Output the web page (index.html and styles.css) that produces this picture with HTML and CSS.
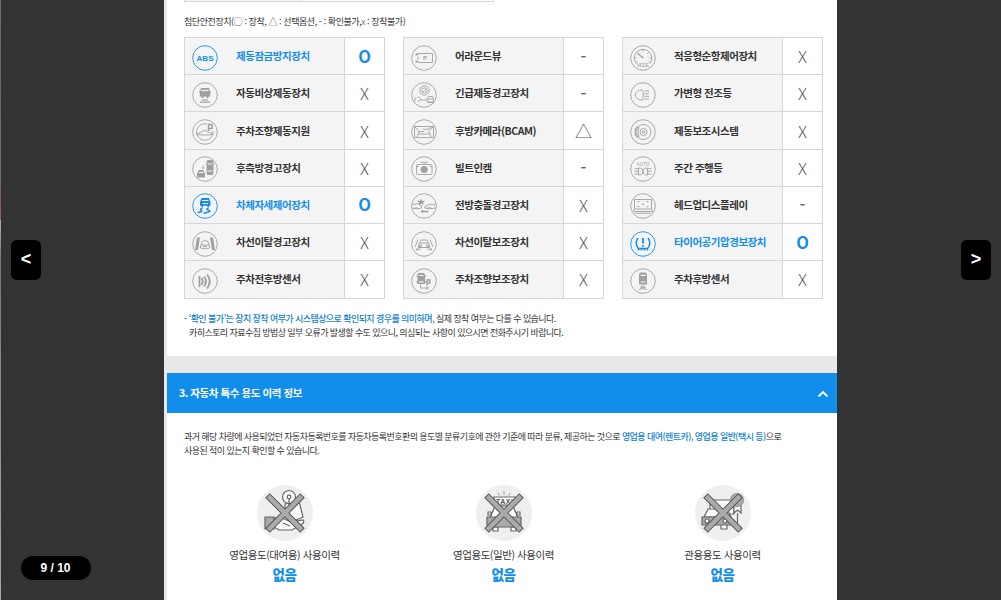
FILE: index.html
```
<!DOCTYPE html>
<html lang="ko">
<head>
    <meta charset="UTF-8">
    <meta name="viewport" content="width=device-width, initial-scale=1.0">
    <title>자동차 이력 정보</title>
    <link rel="stylesheet" href="styles.css">
</head>
<body>
    <div class="viewer">
        <div class="page">
            <section class="card safety">
                <div class="prev-table"><div class="prev-label"></div><div class="prev-value"></div></div>
                <p class="legend">첨단안전장치(<span class="sym">○</span> : 장착, <span class="sym">△</span> : 선택옵션, - : 확인불가,<span class="sym">x</span> : 장착불가)</p>
                <div class="tables">
                    <ul class="options">
                        <li class="on">
                            <svg class="icon" viewBox="0 0 26 26"><circle cx="13" cy="13" r="12.3"/><text x="13" y="16" textLength="17">ABS</text></svg>
                            <span class="name">제동잠금방지장치</span><span class="mark">O</span>
                        </li>
                        <li>
                            <svg class="icon" viewBox="0 0 26 26"><circle cx="13" cy="13" r="12.3"/><path class="fill" d="M9 6h8l.800 3H19v1.500h-.800v4h-1.700V16h-2v-1.500h-3V16h-2v-1.500H7.800v-4H7V9h1.200zM10.500 17.300h5l1 1.200h-7zM8 19.500h10v1.300H8z"/><path class="cut" d="M9.500 8.500h7"/></svg>
                            <span class="name">자동비상제동장치</span><span class="mark">X</span>
                        </li>
                        <li>
                            <svg class="icon" viewBox="0 0 26 26"><circle cx="13" cy="13" r="12.3"/><path d="M15 5A8.300 8.300 0 1 0 21 12M5 14.500q4-.500 7.500-3.500 4 3 8.500 3.500M5 15.500q4 .500 8 .500t8-.500"/><path class="thick" d="M16.500 12V5.500h3.500v4h-3.500"/></svg>
                            <span class="name">주차조향제동지원</span><span class="mark">X</span>
                        </li>
                        <li>
                            <svg class="icon" viewBox="0 0 26 26"><circle cx="13" cy="13" r="12.3"/><path class="fill" d="M15.500 4h5l1 2v11l-1 2h-5l-1-2V6zM6.500 14h5l.800 2.500.700.500v4.500H5V17l.700-.500zM13.500 8h9v1h-9z"/><path class="cut" d="M15.500 8h5M15.500 15h5M6.500 16.500h5"/><path d="M11 9.500l1 3M9.500 11l1.500 2"/></svg>
                            <span class="name">후측방경고장치</span><span class="mark">X</span>
                        </li>
                        <li class="on">
                            <svg class="icon" viewBox="0 0 26 26"><circle cx="13" cy="13" r="12.3"/><path class="fill" d="M9.500 5h7.500l1 3 .500.800v4h-1.500v1.500h-1.500v-1.500h-4.500v1.500H9.500v-1.500H8V8.800L8.500 8z"/><path class="cut" d="M10 7.500h6.500M10.500 10.500h5.500"/><path class="thick" d="M10.500 15c-5 2 1 2.500-1 3.500s-2.500 1-4 1M16.500 15c-5 2 3.500 2.500 1 3.500s-4.500 1-6 2"/></svg>
                            <span class="name">차체자세제어장치</span><span class="mark">O</span>
                        </li>
                        <li>
                            <svg class="icon" viewBox="0 0 26 26"><circle cx="13" cy="13" r="12.3"/><path class="fill" d="M5 6.500h3L6 19H3zM18 6.500h3L23 19h-3z"/><path d="M9 14l1.200-3.500q3-2 5.600 0L17 14l.500 1v2q-4.500 2-9 0v-2zM9 14h8M11.500 16.500V15.500h3v1"/></svg>
                            <span class="name">차선이탈경고장치</span><span class="mark">X</span>
                        </li>
                        <li>
                            <svg class="icon" viewBox="0 0 26 26"><circle cx="13" cy="13" r="12.3"/><path class="wave" d="M7.500 8v11M9.500 10q2.500 3.500 0 7M12 8.500q4 5 0 10M15 6.500q5.500 7 0 14"/></svg>
                            <span class="name">주차전후방센서</span><span class="mark">X</span>
                        </li>
                    </ul>
                    <ul class="options">
                        <li>
                            <svg class="icon" viewBox="0 0 26 26"><circle cx="13" cy="13" r="12.3"/><path d="M7 8.500h14.500v9H7M7 8.500v1M7 11.500v3M7 9.500H4.500M7 16.500H4.500"/><path class="fill" d="M4 9.500L6.500 8v3zM4 16.500L6.500 15v3z"/><text class="tiny p" x="14" y="15.200">P</text></svg>
                            <span class="name">어라운드뷰</span><span class="mark dash">-</span>
                        </li>
                        <li>
                            <svg class="icon" viewBox="0 0 26 26"><circle cx="13" cy="13" r="12.3"/><circle cx="13.500" cy="8.500" r="4.700"/><circle cx="13.500" cy="8.500" r="2.700"/><path d="M12 10l3-3M4 15.500v4M6 15q4 0 3.500 2.500t-3 1.500M10 18h5M16 17l1.500-2.500h4l1 2.500v3H16zM17 20.500h5M16 17h6"/></svg>
                            <span class="name">긴급제동경고장치</span><span class="mark dash">-</span>
                        </li>
                        <li>
                            <svg class="icon" viewBox="0 0 26 26"><circle cx="13" cy="13" r="12.3"/><path d="M3.500 7.500h19v11h-19zM4 8l4 4.500h5M22 8l-4.500 4M8 12.500L6 18.500M18 12.500l2 6M7.500 15h11M12 10l4 .500L20.500 8"/></svg>
                            <span class="name">후방카메라(BCAM)</span><span class="mark tri">△</span>
                        </li>
                        <li>
                            <svg class="icon" viewBox="0 0 26 26"><circle cx="13" cy="13" r="12.3"/><rect x="5.500" y="8.500" width="15.500" height="10" rx="1"/><circle class="fill" cx="13.200" cy="13.500" r="3.500"/><path d="M13.200 8.500V6M9.500 6.300h7.500M6 10.500h2M18.500 10.500h2"/></svg>
                            <span class="name">빌트인캠</span><span class="mark dash">-</span>
                        </li>
                        <li>
                            <svg class="icon" viewBox="0 0 26 26"><circle cx="13" cy="13" r="12.3"/><path d="M1.500 11.500q5-2 9 1v2.500q-4 1.500-9 0M24.500 12q-6-2-10 1l-1 2q6 1.500 11 0M3 15.500q3-2 5 .500M16 15.500q2-2 5 0"/><path class="fill" d="M6 7.500l3 .500L10 5.500l1 2.500 3-.300-2 2 1 2-3-1-2.500 1 .500-2zM9.500 18.500l2.500-2v1.300h5.500v1.400H12v1.300z"/></svg>
                            <span class="name">전방충돌경고장치</span><span class="mark">X</span>
                        </li>
                        <li>
                            <svg class="icon" viewBox="0 0 26 26"><circle cx="13" cy="13" r="12.3"/><path d="M7 8.500L4 16M19 8.500l3 7.500M8.500 12L10 9h6l1.500 3 .700 1v3.500H7.800V13zM9 12h8M9 14h2M15 14h2"/><path class="fill" d="M7.500 14.500h3v2.200h-3zM15.500 14.500h3v2.200h-3zM4.500 18.300l2-1.500v1h3v1h-3v1zM21.500 18.300l-2-1.500v1h-3v1h3v1z"/></svg>
                            <span class="name">차선이탈보조장치</span><span class="mark">X</span>
                        </li>
                        <li>
                            <svg class="icon" viewBox="0 0 26 26"><circle cx="13" cy="13" r="12.3"/><path class="fill" d="M7.500 5h5.500l1 2v9H6.500V7zM5.500 7.500H15v1.300H5.500zM5.500 13H15v1.500H5.500z"/><path class="cut" d="M8 7.500h4.500M8 13.800h4.500"/><path class="thick" d="M16 17.500V12h2.800v3H16"/><path d="M9.500 16.500v3.500h8M15.500 18.500l2 1.500-2 1.500"/></svg>
                            <span class="name">주차조향보조장치</span><span class="mark">X</span>
                        </li>
                    </ul>
                    <ul class="options">
                        <li>
                            <svg class="icon" viewBox="0 0 26 26"><circle cx="13" cy="13" r="12.3"/><path d="M6 18.500A8.800 8.800 0 1 1 20 18.500M13 4.500v2M4.500 13h2M19.500 13h2M7.300 7.300l1.400 1.400M18.700 7.300l-1.400 1.400M5.800 17l1.500-1M20.200 17l-1.500-1"/><path class="thick" d="M7.500 8.500l6 4.500"/><text class="tiny" x="13" y="21.500" textLength="12">MODE</text></svg>
                            <span class="name">적응형순항제어장치</span><span class="mark">X</span>
                        </li>
                        <li>
                            <svg class="icon" viewBox="0 0 26 26"><circle cx="13" cy="13" r="12.3"/><path d="M12.500 8C7.500 8 5.500 10.500 5.500 13s2 5 7 5c1-3 1-7 0-10zM14.500 9H19M14.500 11.700H19M14.500 14.300H19M14.500 17H19"/></svg>
                            <span class="name">가변형 전조등</span><span class="mark">X</span>
                        </li>
                        <li>
                            <svg class="icon" viewBox="0 0 26 26"><circle cx="13" cy="13" r="12.3"/><circle cx="13.500" cy="13" r="7.500"/><circle cx="13.500" cy="13" r="3.500"/><circle cx="13.500" cy="13" r="1.200"/><path d="M7 7.500q-4 5.500 0 11l2-1q-2.500-4.500 0-9zM4.500 10l3 .500M4.500 16l3-.500"/></svg>
                            <span class="name">제동보조시스템</span><span class="mark">X</span>
                        </li>
                        <li>
                            <svg class="icon" viewBox="0 0 26 26"><circle cx="13" cy="13" r="12.3"/><text class="tiny" x="13" y="9.500" textLength="13">AUTO</text><path d="M4.500 12.700H8M4.500 15.300H8M4.500 18H8M8.500 12q4.500 0 4.500 3.500T8.500 19zM21.500 12.700H18M21.500 15.300H18M21.500 18H18M17.500 12Q13 12 13 15.500t4.500 3.500z"/></svg>
                            <span class="name">주간 주행등</span><span class="mark">X</span>
                        </li>
                        <li>
                            <svg class="icon" viewBox="0 0 26 26"><circle cx="13" cy="13" r="12.3"/><path d="M4.500 6.500h17v9.500h-17zM4 16l-.500 2.500h19L22 16M5 20.200h16M8 9.500V8.500h1.500M18 9.500V8.500h-1.500M8 12.800v1h1.500M18 12.800v1h-1.500M12 11.200h2M13 10.200v2"/></svg>
                            <span class="name">헤드업디스플레이</span><span class="mark dash">-</span>
                        </li>
                        <li class="on">
                            <svg class="icon" viewBox="0 0 26 26"><circle cx="13" cy="13" r="12.3"/><path class="thick" d="M8 7Q4 12.500 8.500 17.500h9Q22 12.500 18 7M8.500 17.500v2M11.500 17.500v2M14.500 17.500v2M17.500 17.500v2"/><path class="wave" d="M13 7v5.500M13 14v1.800"/></svg>
                            <span class="name">타이어공기압경보장치</span><span class="mark">O</span>
                        </li>
                        <li>
                            <svg class="icon" viewBox="0 0 26 26"><circle cx="13" cy="13" r="12.3"/><path class="fill" d="M10 4.500h6l1 2V16.500H9V6.500z"/><path class="cut" d="M10.500 7.300h5M10.500 14h5"/><path d="M11 18.500q2-1 4 0M10 20q3-1.500 6 0M9 21.500q4-2 8 0"/></svg>
                            <span class="name">주차후방센서</span><span class="mark">X</span>
                        </li>
                    </ul>
                </div>
                <div class="notes">
                    <p class="note-first">- <em>‘확인 불가’는 장치 장착 여부가 시스템상으로 확인되지 경우를 의미하며,</em> 실제 장착 여부는 다를 수 있습니다.</p>
                    <p class="note-second">카히스토리 자료수집 방법상 일부 오류가 발생할 수도 있으니, 의심되는 사항이 있으시면 전화주시기 바랍니다.</p>
                </div>
            </section>

            <section class="card usage">
                <header class="section-head">
                    <h2>3. 자동차 특수 용도 이력 정보</h2>
                    <svg class="chevron" viewBox="0 0 12 8"><path d="M1.500 6.500L6 2l4.500 4.500"/></svg>
                </header>
                <p class="desc">과거 해당 차량에 사용되었던 자동차등록번호를 자동차등록번호판의 용도별 분류기호에 관한 기준에 따라 분류, 제공하는 것으로 <em>영업용 대여(렌트카), 영업용 일반(택시 등)</em>으로<br>사용된 적이 있는지 확인할 수 있습니다.</p>
                <div class="history">
                    <div class="item">
                        <svg class="pic" viewBox="0 0 56 56">
                            <circle class="disc" cx="28" cy="28" r="28"/>
                            <path class="paper" d="M28 19l14-3 4 16-9 4-9-4z"/>
                            <circle class="paper" cx="32" cy="12" r="6.500"/>
                            <circle cx="32" cy="12" r="1.800"/>
                            <path d="M32 14v10"/>
                            <path class="paper" d="M17 33h8l9 4 12-2q2 2-1 4l-10 6H22l-5-3zM26 38l7 3"/>
                            <path class="grey" d="M8 32h9v12H8z"/>
                            <path class="cross-edge" d="M10.500 10.500l35 35M45.500 10.500l-35 35"/>
                            <path class="cross" d="M11.200 11.200l33.600 33.600M44.800 11.200L11.200 44.800"/>
                        </svg>
                        <span class="label">영업용도(대여용) 사용이력</span>
                        <strong>없음</strong>
                    </div>
                    <div class="item">
                        <svg class="pic" viewBox="0 0 56 56">
                            <circle class="disc" cx="28" cy="28" r="28"/>
                            <path class="ray" d="M28 6v4M22 8l1.500 2.500M34 8l-1.500 2.500"/>
                            <path class="paper" d="M19 21h18l5 12H14z"/>
                            <path class="paper" d="M18 12h21v8H18z"/>
                            <text class="taxi" x="28.500" y="19" textLength="17">TAXI</text>
                            <path class="paper" d="M17 42h5v4h-5zM35 42h5v4h-5zM12 27h3v3h-3zM41 27h3v3h-3z"/>
                            <path class="grey" d="M11 32h34v10H11z"/>
                            <path class="cross-edge" d="M10.500 10.500l35 35M45.500 10.500l-35 35"/>
                            <path class="cross" d="M11.200 11.200l33.600 33.600M44.800 11.200L11.200 44.800"/>
                        </svg>
                        <span class="label">영업용도(일반) 사용이력</span>
                        <strong>없음</strong>
                    </div>
                    <div class="item">
                        <svg class="pic" viewBox="0 0 56 56">
                            <circle class="disc" cx="28" cy="28" r="28"/>
                            <path class="paper" d="M15 15h24v14H15z"/>
                            <path class="paper" d="M13 24h19l4 8H9zM26 39h6v5h-6zM39 20h7v8l-3.500-3-3.500 3z"/>
                            <path d="M42.500 28v12H36"/>
                            <circle class="medal" cx="42" cy="15" r="6.500"/>
                            <path class="grey" d="M7 32h29v8H7z"/>
                            <circle class="paper" cx="12" cy="36" r="2"/>
                            <circle class="paper" cx="30" cy="36" r="2"/>
                            <path class="cross-edge" d="M10.500 10.500l35 35M45.500 10.500l-35 35"/>
                            <path class="cross" d="M11.200 11.200l33.600 33.600M44.800 11.200L11.200 44.800"/>
                        </svg>
                        <span class="label">관용용도 사용이력</span>
                        <strong>없음</strong>
                    </div>
                </div>
            </section>
        </div>

        <button class="nav prev">&lt;</button>
        <button class="nav next">&gt;</button>
        <div class="counter">9 / 10</div>
    </div>
</body>
</html>
```
FILE: styles.css
```
* {
    box-sizing: border-box;
}

body {
    margin: 0;
    overflow: hidden;
    font-family: "Noto Sans CJK KR", "Noto Sans", sans-serif;
    color: #333;
    background: linear-gradient(#6f6a66 0, #686868 100px, #74706d 170px, #8b5558 200px, #a05a5e 219px, #b0b0b0 221px, #777 260px, #a8a8a8 100%);
}

p, h2, ul {
    margin: 0;
    padding: 0;
}

em {
    font-style: normal;
    font-weight: 500;
    color: #117fce;
}

.viewer {
    position: relative;
    height: 600px;
    margin-left: 1px;
    padding-left: 163px;
    background-color: #333;
    overflow: hidden;
}

.page {
    width: 673px;
    height: 600px;
    padding-left: 3px;
    background-color: #e8e8e8;
}

.card {
    background-color: #fff;
}

.safety {
    height: 356px;
    padding-left: 17px;
}

/* tail of the table above */
.prev-table {
    display: flex;
    width: 310px;
    height: 2px;
    border: 1px solid #d6d6d6;
    border-top: none;
}

.prev-label {
    width: 117px;
    background-color: #f4f4f4;
    border-right: 1px solid #d6d6d6;
}

.legend {
    padding-top: 13px;
    height: 35px;
    font-size: 9px;
    line-height: 14px;
    letter-spacing: -0.43px;
    white-space: nowrap;
}

.sym {
    font-weight: 300;
}

.tables {
    display: flex;
    gap: 18.5px;
}

.options {
    display: grid;
    grid-template-rows: repeat(7, 1fr);
    width: 200.5px;
    height: 261.5px;
    list-style: none;
    border: 1px solid #d6d6d6;
    border-bottom: none;
}

.options li {
    display: flex;
    align-items: center;
    border-bottom: 1px solid #d6d6d6;
    background-color: #f4f4f4;
}

.icon {
    width: 26px;
    height: 26px;
    margin: 3px 0 0 6.5px;
    fill: none;
    stroke: #a0a0a0;
    stroke-width: 0.9;
}

.icon .fill {
    fill: #a0a0a0;
    stroke: none;
}

.icon .cut {
    stroke: #f4f4f4;
    stroke-width: 1.2;
}

.icon .thick {
    stroke-width: 1.5;
}

.icon .wave {
    stroke-width: 1.8;
}

.icon text {
    font: bold 8px "Liberation Sans", sans-serif;
    text-anchor: middle;
    stroke: none;
    fill: #a0a0a0;
}

.icon .tiny {
    font-size: 4.5px;
    font-weight: 400;
}

.icon .p {
    font-size: 6px;
    font-weight: 700;
}

.name {
    flex: 1;
    padding-left: 18.5px;
    font-size: 10.5px;
    font-weight: 700;
    line-height: 16px;
    letter-spacing: -0.46px;
    white-space: nowrap;
}

.mark {
    display: flex;
    align-items: center;
    justify-content: center;
    align-self: stretch;
    width: 40px;
    padding-left: 1px;
    border-left: 1px solid #d6d6d6;
    background-color: #fff;
    font-size: 16.5px;
    font-weight: 300;
    line-height: 20px;
    color: #555;
}

.dash {
    padding-bottom: 1px;
    font-weight: 500;
    color: #666;
}

.tri {
    font-size: 17px;
}

.on .icon {
    stroke: #118eec;
}

.on .icon .fill,
.on .icon text {
    fill: #118eec;
}

.on .icon .fill {
    stroke: none;
}

.on .icon .cut {
    stroke: #f4f4f4;
}

.on .name {
    color: #118eec;
}

.on .mark {
    padding-bottom: 1px;
    color: #118eec;
    font-weight: 700;
}

.notes {
    padding-top: 13.5px;
    font-size: 9px;
    line-height: 14px;
    letter-spacing: -0.57px;
    white-space: nowrap;
}

.note-second {
    padding-left: 5px;
}

.usage {
    height: 227px;
    margin-top: 17px;
}

.section-head {
    display: flex;
    align-items: center;
    justify-content: space-between;
    height: 40px;
    padding: 0 8px 0 12px;
    background-color: #118eec;
    color: #fff;
}

.section-head h2 {
    font-size: 10.5px;
    line-height: 16px;
    letter-spacing: -0.42px;
}

.chevron {
    width: 12px;
    height: 8px;
    margin-top: 2px;
    fill: none;
    stroke: #fff;
    stroke-width: 1.8;
}

.desc {
    padding: 17px 0 0 17px;
    font-size: 9px;
    line-height: 14px;
    letter-spacing: -0.57px;
    white-space: nowrap;
}

.history {
    display: grid;
    grid-template-columns: repeat(3, 219px);
    padding: 27px 0 0 8px;
}

.item {
    display: flex;
    flex-direction: column;
    align-items: center;
}

.pic {
    width: 56px;
    height: 56px;
    fill: none;
    stroke: #666;
    stroke-width: 1.2;
}

.disc {
    fill: #efefef;
    stroke: none;
}

.paper {
    fill: #fafafa;
}

.grey {
    fill: #aaa;
}

.ray {
    stroke: #aaa;
}

.medal {
    fill: #aaa;
    stroke: #999;
}

.taxi {
    font: bold 7px "Liberation Sans", sans-serif;
    text-anchor: middle;
    fill: #555;
    stroke: none;
}

.cross-edge {
    stroke: #555;
    stroke-width: 6.5;
}

.cross {
    stroke: #aaa;
    stroke-width: 4.5;
}

.label {
    margin-top: 6px;
    font-size: 10.5px;
    line-height: 16px;
    letter-spacing: -0.42px;
}

.item strong {
    margin-top: 1px;
    font-size: 13.5px;
    font-weight: 900;
    line-height: 20px;
    letter-spacing: -0.4px;
    color: #118eec;
}

/* gallery controls over the page */
.nav {
    position: absolute;
    top: 240px;
    width: 30px;
    height: 40px;
    padding: 0 0 2px;
    border: none;
    border-radius: 6px;
    background-color: #000;
    color: #fff;
    font: bold 18px "Liberation Sans", sans-serif;
}

.prev {
    left: 10px;
}

.next {
    right: 10px;
}

.counter {
    position: absolute;
    left: 20px;
    bottom: 20px;
    width: 70px;
    height: 24px;
    padding-right: 1px;
    border-radius: 12px;
    background-color: #000;
    color: #fff;
    font: bold 12px/24px "Liberation Sans", sans-serif;
    text-align: center;
}
```
